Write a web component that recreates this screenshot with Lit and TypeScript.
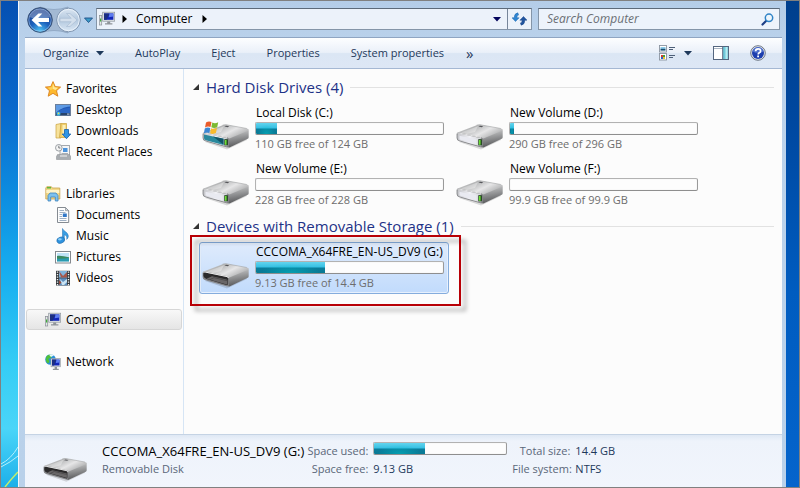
import { LitElement, html, svg, css, nothing, TemplateResult } from "lit";
import { customElement, property } from "lit/decorators.js";
import { classMap } from "lit/directives/class-map.js";
import { styleMap } from "lit/directives/style-map.js";

type Glyph = TemplateResult;

const monitor = (x: number, y: number) => svg`
  <g transform="translate(${x} ${y})">
    <rect x="0" y="0" width="12" height="9" fill="#dfe3e6" stroke="#8d949b" stroke-width=".7"/>
    <rect x="1.3" y="1.2" width="9.4" height="6.4" fill="#1226b8"/>
    <path d="M1.3 1.2h5.5l-3 6.4H1.3z" fill="#1c2f80"/>
    <path d="M6.8 1.2h3.9v3.2L6 5z" fill="#5d7df0"/>
    <path d="M4.5 9.3h3v1.8h2.2v1.3H2.3v-1.3h2.2z" fill="#8f9499"/>
  </g>`;

const icons: Record<string, Glyph> = {
  favorites: svg`
    <path d="M8 .6l2.200 5 5.400.5-4.100 3.600 1.300 5.500L8 12.300l-4.800 2.900 1.300-5.500L.4 6.100l5.400-.5z" fill="#fdb92e" stroke="#d9801c" stroke-width=".9" stroke-linejoin="round"/>
    <path d="M8 2.600l1.500 3.700 3.600.5-2.700 2.300L8 8z" fill="#ffe795"/>
    <path d="M8 2.600L6.500 6.300l-3.600.5 2.700 2.300L8 8z" fill="#ffd257"/>`,
  desktop: svg`
    <rect x=".5" y="2.500" width="15" height="11" fill="#2259b4" stroke="#6c7f9b"/>
    <path d="M1 3h14v1.500C9 5 4 7.500 1 11z" fill="#5f9be4"/>
    <path d="M1 11c4-3.500 9-5 14-5.200V11z" fill="#2b66c4"/>
    <rect x="1" y="11" width="14" height="2.200" fill="#27436b"/>
    <circle cx="3.500" cy="11.700" r="2" fill="#36b6e8"/><circle cx="3.500" cy="11.400" r=".8" fill="#f6d24c"/>
    <rect x="12" y="11.600" width="2.500" height="1" fill="#c7d6e8"/>`,
  downloads: svg`
    <path d="M1 1.500l5-1v14.500H1z" fill="#f7e29b" stroke="#c9a23c" stroke-width=".7"/>
    <path d="M6 .5h5.500v14H4.500z" fill="#f0cd6a" stroke="#c9a23c" stroke-width=".7"/>
    <path d="M7.500 2h3v11h-3z" fill="#fbeeb9"/>
    <path d="M9.500 6.500h4v4.500h2.300l-4.300 4.700L7.200 11h2.300z" fill="#2f95e6" stroke="#1560a8" stroke-width=".8"/>`,
  recent: svg`
    <rect x="5" y="1.500" width="9.500" height="10" fill="#f5f6f7" stroke="#8f959b" stroke-width=".8"/>
    <rect x="8" y="4" width="4.500" height="4" fill="#4d94dc"/>
    <path d="M6.500 9.500h6.500" stroke="#a9afb5"/>
    <path d="M2.500 10.500h12l1.200 2v3H1.500v-3z" fill="#a9adb1" stroke="#84898d" stroke-width=".5"/>
    <path d="M5 12h7" stroke="#f2f2f2"/>
    <circle cx="3.800" cy="3.800" r="3.300" fill="#f4f4f4" stroke="#9ba0a5"/>
    <path d="M3.800 1.800v2.200h1.600" fill="none" stroke="#5c6166" stroke-width=".8"/>`,
  libraries: svg`
    <path d="M.8 2l1-1.300h4.500l1 1.300h7.500v11H.8z" fill="#f3d98a" stroke="#c8a24a" stroke-width=".8"/>
    <rect x="2" y="1" width="4" height="1.500" fill="#5fb83e"/>
    <path d="M1.300 4h13v3h-13z" fill="#fdf3c8"/>
    <path d="M3 15V9.500l2-2.500h6l2 2.500V15h-2.700v-4H5.700v4z" fill="#7cc1ee" stroke="#3c84bd" stroke-width=".8"/>`,
  documents: svg`
    <path d="M2.500.5h8l3.200 3.200v11.800H2.500z" fill="#fdfdfd" stroke="#858b92"/>
    <path d="M10.500.5v3.200h3.200z" fill="#d5dbe1" stroke="#858b92" stroke-width=".7"/>
    <path d="M4.500 3.500h4.500M4.500 5.500h6M4.500 7.500h2.500M4.500 9.500h2.500M4.500 11.500h7M4.500 13.500h7" stroke="#94a7bd" stroke-width=".9"/>
    <rect x="7.800" y="6.500" width="4" height="3.500" fill="#3278c8"/>`,
  music: svg`
    <path d="M7.500.5c.8 2.800 5.500 3.500 5.800 7.300.1 1.600-.8 3-1.600 3.600.6-2.600-.4-4.100-2.400-4.700v5.600H7.500z" fill="#3a9fe4" stroke="#1c6cb0" stroke-width=".5"/>
    <ellipse cx="5.700" cy="12.200" rx="3.900" ry="3" transform="rotate(-18 5.700 12.200)" fill="#2e93df" stroke="#1a66a9" stroke-width=".6"/>
    <ellipse cx="4.900" cy="11.300" rx="1.900" ry="1.100" fill="#8fd0f6"/>`,
  pictures: svg`
    <rect x=".5" y="2.500" width="15" height="11.500" fill="#fff" stroke="#84898f"/>
    <rect x="2" y="4" width="12" height="8.500" fill="#bfe3f7"/>
    <path d="M2 7c3-1 7 .5 12 1.200v2H2z" fill="#3b8a62"/>
    <path d="M2 9.500c4 .8 8-.3 12-.5v3.500H2z" fill="#2a9bb0"/>`,
  videos: svg`
    <rect x="1" y=".8" width="14" height="14.700" fill="#33383d"/>
    <rect x="4" y="1" width="8" height="6.600" fill="#7fb3dc"/><rect x="4" y="8.300" width="8" height="7" fill="#5d8fc0"/>
    <path d="M4 1l4 5 4-4v5.600H6z" fill="#a5564a"/><path d="M5 9l3 3 4-3v3l-3 3H7z" fill="#c9e3f3"/><path d="M4 10l2.500 2.500L4 15z" fill="#944a3c"/>
    <path d="M2.500 1.500v14M13.500 1.500v14" stroke="#f4f4f4" stroke-width="1.400" stroke-dasharray="1.300 1.200"/>`,
  computer: svg`
    <rect x=".5" y="4.500" width="2.200" height="9.500" fill="#e2e5e8" stroke="#898f95" stroke-width=".7"/>
    <rect x="1" y="7.500" width="1.200" height="3" fill="#3fae38"/>${monitor(3.7, 1.2)}`,
  network: svg`
    <circle cx="5.500" cy="5.500" r="5.300" fill="#2b8fd8"/>
    <path d="M1.500 2.500C3.500.5 6.500 0 7.500 1.300L6 3.800l-2.500 1 1 3L3 9.500C.8 8 .2 5 1.500 2.500z" fill="#4fc13a"/>
    <path d="M4 .7c2-.8 4 0 4.800.8L6 3z" fill="#e8f7fb"/>
    <g transform="translate(6 4.500) scale(.8 .92)">${monitor(0, 0)}</g>`,
};

const glyph = (name: string) => html`<svg class="icon" viewBox="0 0 16 16" aria-hidden="true">${icons[name]}</svg>`;

const downArrow = html`<svg class="caret" viewBox="0 0 8 5" aria-hidden="true"><path d="M0 0h8L4 4.600z" fill="currentColor"/></svg>`;

@customElement("drive-icon")
export class DriveIcon extends LitElement {
  @property() kind = "hard";

  static styles = css`
    :host { display: block; }
    svg { display: block; width: 100%; }
  `;

  render() {
    const removable = this.kind === "removable";
    return html`
      <svg viewBox="0 -3 47 29" aria-hidden="true">
        <defs>
          <linearGradient id="top" x1="0" y1="0" x2="1" y2=".6">
            <stop offset="0" stop-color="#dcdcdd"/><stop offset=".35" stop-color="#b4b5b6"/><stop offset=".65" stop-color="#e6e6e7"/><stop offset="1" stop-color="#a9aaab"/>
          </linearGradient>
          <linearGradient id="side" x1="0" y1="0" x2=".2" y2="1">
            <stop offset="0" stop-color="#d0d1d2"/><stop offset="1" stop-color="#58595b"/>
          </linearGradient>
          <linearGradient id="face" x1="0" y1="0" x2="1" y2="0">
            <stop offset="0" stop-color="#c4c5c9"/><stop offset=".5" stop-color="#f1f1f6"/><stop offset="1" stop-color="#d2d3d7"/>
          </linearGradient>
        </defs>
        <path d="M3 18l22 7.500L45 16l-1-3z" fill="#000" opacity=".14"/>
        <path d="M25.500 13.500L46 6q.7.300.7 1.500v5.800q0 1-1 1.500L28 23.300q-2.500 1-2.500-1.500z" fill="url(#side)"/>
        <path d="M1.500 8.500L20.500 1.200q2-.7 4-.4l20.300 3.700q2.400.5 1.900 2L28 14.300q-1.500.6-3.500.3L2 10z" fill="url(#top)"/>
        <path d="M20.500 1.200q2-.7 4-.4l20.300 3.700" fill="none" stroke="#a0a1a2" stroke-width=".6"/>
        <path d="M5 8.500L22 2.200l-3 5.800-8 2z" fill="#fff" opacity=".35"/>
        <path d="M24 1.700l3.200.6-1.400.9-3.300-.6z" fill="#55565a"/>
        <path d="M.6 10q.2-1.900 2.300-1.500L24.500 13q2.500.5 2.500 2.500v6q0 2.300-2.500 1.800L3.200 17.200Q.6 16.200.6 14z" fill="#828386"/>
        ${removable
          ? svg`<path d="M1.400 10.500q.2-1.300 1.700-1l21 4.300q2 .4 2 2.200v4.700q0 1.600-1.700 1.200L4.600 16q-2.600-.8-3.200-3z" fill="#2b2a2b"/>
              <path d="M4.500 15.800l5.500-2.600 15.500 3.600v4.900z" fill="#696768"/><path d="M8 16.600l4-2 13.500 3.200" fill="none" stroke="#464546" stroke-width=".8"/>
              <path d="M1.500 9.400q.8-.6 2-.3L25 13.600q1.200.4 1.700 1.400" fill="none" stroke="#ececec" stroke-width="1"/>`
          : svg`<path d="M1.500 10.800q.2-1.500 1.800-1.200l20.800 4.300q1.700.4 1.700 2v4.900q0 1.700-1.700 1.400L3.400 16.400q-1.900-.6-1.900-2.400z" fill="url(#face)"/>
              <path d="M3.500 11.800l17 3.400v5l-17-4.700z" fill="#e9eaf1"/>
              <path d="M1.500 9.500q.6-.6 1.800-.4L25 13.400" fill="none" stroke="#fafafa" stroke-width=".8"/>
              <rect x="22.300" y="15.200" width="3.600" height="6.200" fill="#1c3a1a"/><rect x="22.900" y="16" width="1.700" height="4.800" fill="#6ddf38"/>`}
        ${this.kind === "system"
          ? svg`<path d="M2 10.500l19.500 4.200v6.300L4 16.300q-2-.6-2-2.400z" fill="#2a899d"/><path d="M11 12.600l10.500 2.200v6z" fill="#125567"/>
              <path d="M4 -1.500q2.800-1.900 5.500-.4L8.500 3.100Q5.800 1.800 3 3.600z" fill="#ea5c2b"/>
              <path d="M10.300 -1.400q2.800 1.300 5.900-.3l-1 4.900q-3 1.500-5.900.1z" fill="#7db931"/>
              <path d="M2.800 4.400q2.800-1.700 5.500-.4l-1 5Q4.600 7.700 1.800 9.500z" fill="#3b87d4"/>
              <path d="M9.100 4.200q2.800 1.300 5.900-.2l-1.100 5.100q-3 1.500-5.800.1z" fill="#f8ba2c"/>`
          : nothing}
      </svg>`;
  }
}

@customElement("space-bar")
export class SpaceBar extends LitElement {
  @property({ type: Number }) used = 0;

  static styles = css`
    :host { display: block; }
    .track {
      box-sizing: border-box;
      height: 13px;
      border: 1px solid #b2b2b2;
      border-bottom-color: #8e8e8e;
      border-right-color: #9a9a9a;
      border-radius: 2px;
      background: #fdfdfd;
      box-shadow: inset 0 0 1px #d0d0d0;
      overflow: hidden;
    }
    .fill {
      height: 100%;
      background:
        radial-gradient(ellipse at 50% 100%, rgba(0, 190, 200, .55), transparent 60%),
        linear-gradient(#62d4ee, #35bfe2 48%, #0b7d9c 52%, #087a94);
    }
  `;

  render() {
    return html`
      <div class="track" role="meter" aria-label="Space used" aria-valuemin="0" aria-valuemax="100" aria-valuenow=${this.used}>
        <div class="fill" style=${styleMap({ width: `${this.used}%` })}></div>
      </div>`;
  }
}

interface Drive { name: string; free: string; used: number; kind: string; selected?: boolean; }

const groups: { title: string; drives: Drive[] }[] = [
  {
    title: "Hard Disk Drives (4)",
    drives: [
      { name: "Local Disk (C:)", free: "110 GB free of 124 GB", used: 11, kind: "system" },
      { name: "New Volume (D:)", free: "290 GB free of 296 GB", used: 2, kind: "hard" },
      { name: "New Volume (E:)", free: "228 GB free of 228 GB", used: 0, kind: "hard" },
      { name: "New Volume (F:)", free: "99.9 GB free of 99.9 GB", used: 0, kind: "hard" },
    ],
  },
  {
    title: "Devices with Removable Storage (1)",
    drives: [
      { name: "CCCOMA_X64FRE_EN-US_DV9 (G:)", free: "9.13 GB free of 14.4 GB", used: 37, kind: "removable", selected: true },
    ],
  },
];

const places: { label: string; icon: string; current?: boolean; items: [string, string][] }[] = [
  { label: "Favorites", icon: "favorites", items: [["Desktop", "desktop"], ["Downloads", "downloads"], ["Recent Places", "recent"]] },
  { label: "Libraries", icon: "libraries", items: [["Documents", "documents"], ["Music", "music"], ["Pictures", "pictures"], ["Videos", "videos"]] },
  { label: "Computer", icon: "computer", current: true, items: [] },
  { label: "Network", icon: "network", items: [] },
];

@customElement("app-root")
export class AppRoot extends LitElement {
  static styles = css`
    :host {
      box-sizing: border-box;
      display: grid;
      grid-template-columns: 17px 1fr 13px;
      min-height: 100vh;
      border: 1px solid #808080;
      font: 12px/16px "Open Sans", "Noto Sans", sans-serif;
      color: #000;
    }
    button, a, input { font: inherit; color: inherit; }
    button { border: 0; padding: 0; background: none; white-space: nowrap; }
    a { text-decoration: none; }
    ul, dl, dd, h2 { margin: 0; padding: 0; font-weight: normal; }
    ul { list-style: none; }
    .icon { display: block; flex: none; width: 16px; height: 16px; }
    .caret { display: block; flex: none; width: 8px; height: 5px; }

    .wall { background: linear-gradient(#0550b2, #0968cc 22%, #0d8de0 40%, #17aef0 56%, #35cdf5 75%, #4ad5f8 88%, #1db0ea); }
    .wall svg { display: block; width: 100%; height: 100%; }
    .wall-right { background: linear-gradient(#003f8d, #0048a0 25%, #005cc0 60%, #0464cc); }

    .window {
      display: flex;
      flex-direction: column;
      min-width: 0;
      padding: 0 4px 0 6px;
      border-left: 1px solid #f4f8fc;
      background: linear-gradient(#b4cde8, #bcd3ec 60px, #b9d1ea);
    }

    .top { display: flex; align-items: center; height: 36px; padding-right: 2px; }
    .history { display: flex; align-items: center; flex: none; width: 71px; }
    .history svg { display: block; }
    .address {
      display: flex;
      align-items: center;
      flex: 1;
      box-sizing: border-box;
      height: 22px;
      border: 1px solid #8495a8;
      border-top-color: #5c6a7a;
      background: #ecf2fa;
      min-width: 0;
    }
    .address .icon { margin: 0 7px 0 2px; }
    .crumb { display: flex; align-items: center; gap: 9px; flex: 1; }
    .crumb svg { flex: none; width: 5px; height: 8px; }
    .address .caret { color: #04045c; margin-right: 6px; }
    .refresh { display: grid; place-items: center; width: 24px; height: 20px; border-left: 1px solid #77869a; }
    .search {
      display: flex;
      align-items: center;
      box-sizing: border-box;
      flex: none;
      width: 242px;
      height: 22px;
      margin-left: 6px;
      padding: 0 5px 0 8px;
      border: 1px solid #8495a8;
      border-top-color: #5c6a7a;
      background: #edf3fb;
    }
    .search input { flex: 1; min-width: 0; border: 0; padding: 0; outline: 0; background: none; font-style: italic; }
    .search input::placeholder { color: #6b6f75; opacity: 1; }

    .toolbar {
      display: flex;
      align-items: center;
      box-sizing: border-box;
      height: 32px;
      padding: 0 16px 0 18px;
      border-top: 1px solid #8fa5c2;
      border-bottom: 1px solid #a5b8d3;
      background: linear-gradient(#fdfeff, #eaf0f9 48%, #dbe6f4 52%, #dde7f5);
      color: #1e395b;
      font-size: 11px;
    }
    .commands { display: flex; align-items: center; gap: 31px; flex: 1; }
    .commands button, .views { display: flex; align-items: center; gap: 7px; }
    .more { margin-left: -9px; font-size: 15px; }
    .tools { display: flex; align-items: center; gap: 21px; }
    .views { gap: 9px; }

    .body { display: flex; flex: 1; min-height: 365px; background: #fcfcfc; }
    nav {
      display: flex;
      flex-direction: column;
      gap: 21px;
      box-sizing: border-box;
      flex: none;
      width: 159px;
      padding: 9px 1px 0;
      border-right: 1px solid #d6e5f5;
    }
    .place {
      display: flex;
      align-items: center;
      gap: 5px;
      box-sizing: border-box;
      height: 21px;
      padding-left: 18px;
      border: 1px solid transparent;
      border-radius: 3px;
    }
    .child { padding-left: 28px; }
    .current { border-color: #d6d6d6; background: linear-gradient(#f8f8f8, #e5e5e5); }

    main { flex: 1; min-width: 0; padding: 6px 8px 0 9px; }
    .group-head { display: flex; align-items: center; gap: 7px; height: 24px; }
    .group-head svg { flex: none; width: 6px; height: 6px; }
    .group-head h2 { font-size: 15px; line-height: 24px; color: #1e3287; white-space: nowrap; }
    .group-head::after { content: ""; flex: 1; height: 1px; background: #e2e2e2; }
    .tiles { display: grid; grid-template-columns: repeat(auto-fill, 250px); gap: 4px; padding: 4px 0 3px 6px; }
    .cell { position: relative; }
    .tile {
      display: grid;
      grid-template-columns: 47px 189px;
      column-gap: 6px;
      align-items: start;
      align-content: start;
      box-sizing: border-box;
      width: 100%;
      height: 52px;
      padding: 2px 0 0 2px;
      border: 1px solid transparent;
      border-radius: 3px;
      text-align: left;
    }
    .tile drive-icon { margin-top: 15px; }
    .tile-text { display: flex; flex-direction: column; }
    .tile-name { padding-left: 1px; line-height: 14px; }
    .tile-free { margin-top: 1px; color: #6d6d6d; font-size: 11px; }
    .tile space-bar { margin-top: 2px; }
    .selected { border-color: #84acdd; background: linear-gradient(#dfebfc, #c1dbfc); box-shadow: inset 0 0 0 1px #e6f0fd; }
    .marker {
      position: absolute;
      inset: -7px -12px -12px -9px;
      border: 2px solid #b80006;
      filter: drop-shadow(5px 5px 2px rgba(0, 0, 0, .35));
      pointer-events: none;
    }

    .details {
      display: flex;
      align-items: flex-start;
      box-sizing: border-box;
      min-height: 53px;
      padding: 7px 18px 0;
      border-top: 1px solid #c5d3e4;
      background: linear-gradient(#dfe8f4, #eef3fb 6px, #f1f5fc);
      color: #5a6779;
      font-size: 11px;
      line-height: 18px;
      white-space: nowrap;
    }
    .details drive-icon { flex: none; width: 44px; margin: 13px 15px 0 0; }
    .details-name { min-width: 202px; color: #000; font-size: 13px; }
    .facts { display: grid; grid-template-columns: 64px 134px 58px auto; gap: 0 5px; }
    .facts dt { text-align: right; }
    .facts dd { color: #1e395b; }
  `;

  private renderHistory() {
    return html`
      <div class="history">
        <svg width="71" height="34" viewBox="0 0 71 34" role="img" aria-label="Back and forward">
          <defs>
            <radialGradient id="back" cx=".5" cy=".95" r=".8">
              <stop offset="0" stop-color="#4fc3f4"/><stop offset=".5" stop-color="#1d62bd"/><stop offset="1" stop-color="#1b3f8e"/>
            </radialGradient>
            <linearGradient id="fwd" x1="0" y1="0" x2="0" y2="1">
              <stop offset="0" stop-color="#dbe6f2"/><stop offset=".5" stop-color="#b3c8de"/><stop offset="1" stop-color="#dbe8f5"/>
            </linearGradient>
          </defs>
          <path d="M15 5q14 5 28 0v26q-14-5-28 0z" fill="#a3b9d3" stroke="#8ba3c0" stroke-width=".8"/>
          <circle cx="15" cy="18" r="12.300" fill="url(#back)" stroke="#3a5275"/>
          <path d="M4.500 15a10.800 10.800 0 0 1 21 0q-10 5-21 0z" fill="#fff" opacity=".3"/>
          <circle cx="15" cy="18" r="11.200" fill="none" stroke="#b9d7f3" opacity=".5"/>
          <path d="M6.500 18l7-6.500h3.800l-4.200 4.500H24v4H13.100l4.200 4.500h-3.800z" fill="#fff"/>
          <circle cx="43.500" cy="18" r="11.800" fill="url(#fwd)" stroke="#8095b0"/>
          <circle cx="43.500" cy="18" r="10.700" fill="none" stroke="#eef5fc" opacity=".8"/>
          <path d="M52 18l-7-6.500h-3.500l4.700 4.800H35v3.400h11.200l-4.700 4.800H45z" fill="#d3dfec" stroke="#a5b9d0" stroke-width=".6"/>
          <path d="M59.500 16h8L63.500 20.500z" fill="#3b9bc8" stroke="#1d4f86" stroke-width=".9"/>
        </svg>
      </div>`;
  }

  private renderTop() {
    const chevron = html`<svg viewBox="0 0 5 8" aria-hidden="true"><path d="M.5 0v8L5 4z" fill="#000"/></svg>`;
    return html`
      <div class="top">
        ${this.renderHistory()}
        <div class="address">
          ${glyph("computer")}
          <div class="crumb">${chevron}<button>Computer</button>${chevron}</div>
          ${downArrow}
          <button class="refresh" aria-label="Refresh">
            <svg width="15" height="14" viewBox="0 0 15 14">
              <path d="M5.800.8L6.600 3Q4.800 3.200 4.800 5.800h2.300L3.500 9.500 0 5.800h2.200Q2.200 1.500 5.800.8z" fill="#2f86d3" stroke="#2269ac" stroke-width=".5"/>
              <path d="M9.200 13.200L8.400 11q1.800-.2 1.800-2.800H7.900l3.600-3.700L15 8.200h-2.200q0 4.300-3.600 5z" fill="#22569f" stroke="#1c478a" stroke-width=".5"/>
            </svg>
          </button>
        </div>
        <label class="search">
          <input type="text" placeholder="Search Computer" aria-label="Search Computer">
          <svg width="13" height="13" viewBox="0 0 13 13" aria-hidden="true">
            <path d="M1.500 11.500L5.500 7.500" stroke="#1e3f86" stroke-width="2.200" stroke-linecap="round"/>
            <circle cx="8" cy="4.800" r="3.700" fill="#eef6fc" stroke="#3083c6" stroke-width="1.500"/>
          </svg>
        </label>
      </div>`;
  }

  private renderToolbar() {
    return html`
      <div class="toolbar">
        <div class="commands">
          <button>Organize ${downArrow}</button>
          <button>AutoPlay</button>
          <button>Eject</button>
          <button>Properties</button>
          <button>System properties</button>
          <button class="more" aria-label="More commands">»</button>
        </div>
        <div class="tools">
          <button class="views" aria-label="Change view">
            <svg width="16" height="16" viewBox="0 0 16 16">
              <rect x=".5" y=".5" width="7" height="6.500" fill="#fff" stroke="#8a94a1" stroke-width=".9"/>
              <rect x="1.500" y="2" width="5" height="2" fill="#8ecbe9"/><rect x="1.500" y="3.800" width="5" height="1.800" fill="#174f72"/>
              <rect x=".5" y="8.500" width="7" height="6.500" fill="#fff" stroke="#8a94a1" stroke-width=".9"/>
              <path d="M2 10h2v2H2z" fill="#d63b2f"/><path d="M4 10h2v2H4z" fill="#3fa33a"/><path d="M2 12h2v2H2z" fill="#2f62c8"/><path d="M4 12h2v2H4z" fill="#efc332"/>
              <path d="M10 2.500h6M10 4.500h4M10 10.500h6M10 12.500h4" stroke="#4d5f78"/>
            </svg>
            ${downArrow}
          </button>
          <button aria-label="Show the preview pane">
            <svg width="16" height="14" viewBox="0 0 16 14" display="block">
              <rect x=".5" y=".5" width="15" height="13" fill="#fff" stroke="#54667f"/>
              <path d="M1 2.500h9" stroke="#a9b5c3"/><path d="M10 1h5v12h-5z" fill="#6fcadb"/><path d="M12.500 1h2v12h-2z" fill="#b8ebf1"/>
              <path d="M9.700 1v12" stroke="#54667f"/>
            </svg>
          </button>
          <button aria-label="Get help">
            <svg width="16" height="16" viewBox="0 0 16 16" display="block">
              <circle cx="8" cy="8" r="7.300" fill="#e4e8ee" stroke="#6d7785"/>
              <circle cx="8" cy="8" r="6" fill="#1e3fae"/>
              <path d="M2.500 6.500a5.700 5.700 0 0 1 11 0q-5 3-11 0z" fill="#6d8de0" opacity=".6"/>
              <path d="M5.600 6.200q0-2.400 2.500-2.400t2.500 2.100q0 1.200-1.300 1.900-1.100.6-1.100 1.600" fill="none" stroke="#fff" stroke-width="1.700"/>
              <rect x="7.200" y="10.500" width="1.800" height="1.800" fill="#fff"/>
            </svg>
          </button>
        </div>
      </div>`;
  }

  private renderNav() {
    return html`
      <nav>
        ${places.map(p => html`
          <ul>
            <li><a href="#" class=${classMap({ place: true, current: !!p.current })}>${glyph(p.icon)}${p.label}</a></li>
            ${p.items.map(([label, icon]) => html`<li><a href="#" class="place child">${glyph(icon)}${label}</a></li>`)}
          </ul>`)}
      </nav>`;
  }

  private renderDrive(d: Drive) {
    return html`
      <div class="cell">
        <button class=${classMap({ tile: true, selected: !!d.selected })}>
          <drive-icon kind=${d.kind}></drive-icon>
          <span class="tile-text">
            <span class="tile-name">${d.name}</span>
            <space-bar .used=${d.used}></space-bar>
            <span class="tile-free">${d.free}</span>
          </span>
        </button>
        ${d.selected ? html`<div class="marker"></div>` : nothing}
      </div>`;
  }

  render() {
    return html`
      <div class="wall">
        <svg viewBox="0 0 17 486" preserveAspectRatio="xMidYMax slice" aria-hidden="true">
          <path d="M0 463Q10 458 17 446M0 466Q10 461 17 455" fill="none" stroke="#b5effc" stroke-width="1"/>
          <path d="M4 486Q12 476 17 471" fill="none" stroke="#c3ee6a" stroke-width="1.500"/>
        </svg>
      </div>
      <div class="window">
        ${this.renderTop()}
        ${this.renderToolbar()}
        <div class="body">
          ${this.renderNav()}
          <main>
            ${groups.map(g => html`
              <section>
                <div class="group-head">
                  <svg viewBox="0 0 6 6" aria-hidden="true"><path d="M6 0v6H0z" fill="#333"/></svg>
                  <h2>${g.title}</h2>
                </div>
                <div class="tiles">${g.drives.map(d => this.renderDrive(d))}</div>
              </section>`)}
          </main>
        </div>
        <div class="details">
          <drive-icon kind="removable"></drive-icon>
          <div>
            <div class="details-name">CCCOMA_X64FRE_EN-US_DV9 (G:)</div>
            <div>Removable Disk</div>
          </div>
          <dl class="facts">
            <dt>Space used:</dt><dd><space-bar .used=${38}></space-bar></dd>
            <dt>Total size:</dt><dd>14.4 GB</dd>
            <dt>Space free:</dt><dd>9.13 GB</dd>
            <dt>File system:</dt><dd>NTFS</dd>
          </dl>
        </div>
      </div>
      <div class="wall-right"></div>`;
  }
}
